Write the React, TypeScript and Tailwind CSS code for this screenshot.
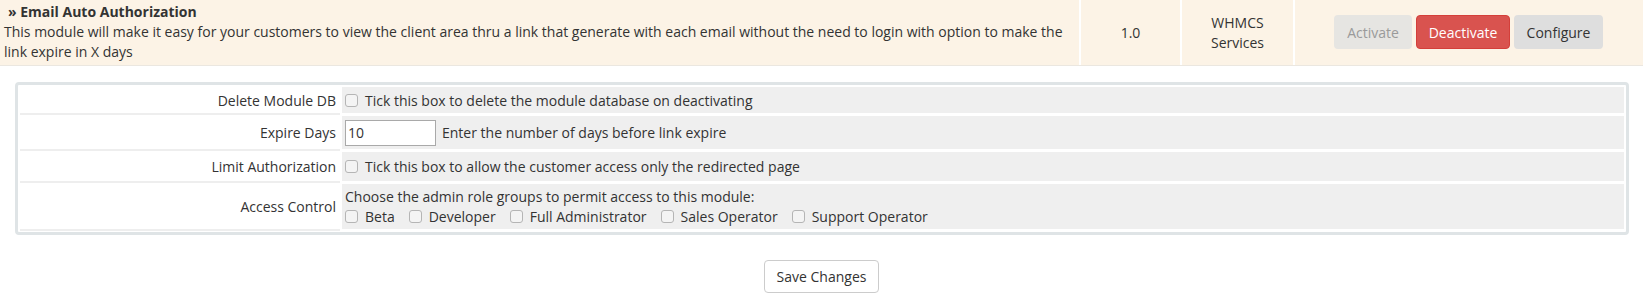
import React from 'react';

const Checkbox: React.FC = () => (
  <input
    type="checkbox"
    className="appearance-none w-[13px] h-[13px] border border-[#b5b5b5] rounded-[3px] bg-[#f4f4f4] shrink-0 m-0"
  />
);

const roles = ['Beta', 'Developer', 'Full Administrator', 'Sales Operator', 'Support Operator'];

const Label: React.FC<{ children: React.ReactNode }> = ({ children }) => (
  <div className="bg-white flex items-center justify-end pr-[4px] shadow-[0_2px_0_#eeeeee]">
    {children}
  </div>
);

export default function App() {
  return (
    <div className="w-[1643px] h-[298px] bg-white font-['Open_Sans',sans-serif] text-[14px] text-[#333]">
      {/* Module row */}
      <div className="flex h-[66px] bg-[#fcf3e6] border-b border-[#ebe7e0]">
        <div className="w-[1079px] pl-[4px] pr-[8px] pt-[2px] leading-[20px]">
          <div className="font-bold pl-[4px]">» Email Auto Authorization</div>
          <div>
            This module will make it easy for your customers to view the client area thru a link that generate with
            each email without the need to login with option to make the link expire in X days
          </div>
        </div>
        <div className="w-[101px] border-l-2 border-white flex items-center justify-center">1.0</div>
        <div className="w-[113px] border-l-2 border-white flex items-center justify-center text-center leading-[20px]">
          WHMCS
          <br />
          Services
        </div>
        <div className="flex-1 border-l-2 border-white flex items-center pl-[39px] gap-[4px] pb-[1px]">
          <button className="w-[78px] h-[34px] rounded-[4px] bg-[#e6e5e2] text-[#9a9a9a]">Activate</button>
          <button className="w-[94px] h-[34px] rounded-[4px] bg-[#d9534f] border border-[#d43f3a] text-white">
            Deactivate
          </button>
          <button className="w-[89px] h-[34px] rounded-[4px] bg-[#dedede] text-[#333]">Configure</button>
        </div>
      </div>

      {/* Config box */}
      <div className="mt-[16px] ml-[15px] mr-[14px] border-[3px] border-[#dfe4e6] rounded-[4px] p-[2px] pb-[3px]">
        <div className="grid grid-cols-[320px_1fr] gap-x-[2px] gap-y-[3px]">
          <Label>Delete Module DB</Label>
          <div className="bg-[#efefef] h-[26px] flex items-center pl-[3px] gap-[7px]">
            <Checkbox />
            <span>Tick this box to delete the module database on deactivating</span>
          </div>

          <Label>Expire Days</Label>
          <div className="bg-[#efefef] h-[33px] flex items-center pl-[3px] gap-[6px]">
            <input
              type="text"
              defaultValue="10"
              className="w-[91px] h-[26px] border border-[#a9a9a9] bg-white px-[2px] text-[14px] text-[#333] outline-none"
            />
            <span>Enter the number of days before link expire</span>
          </div>

          <Label>Limit Authorization</Label>
          <div className="bg-[#efefef] h-[29px] flex items-center pl-[3px] gap-[7px]">
            <Checkbox />
            <span>Tick this box to allow the customer access only the redirected page</span>
          </div>

          <Label>Access Control</Label>
          <div className="bg-[#efefef] h-[45px] flex flex-col justify-center pl-[3px] leading-[20px]">
            <div>Choose the admin role groups to permit access to this module:</div>
            <div className="flex items-center gap-[14px]">
              {roles.map((r) => (
                <label key={r} className="flex items-center gap-[7px]">
                  <Checkbox />
                  <span>{r}</span>
                </label>
              ))}
            </div>
          </div>
        </div>
      </div>

      {/* Save */}
      <div className="flex justify-center mt-[25px]">
        <button className="w-[115px] h-[33px] border border-[#ccc] rounded-[4px] bg-white text-[#333]">
          Save Changes
        </button>
      </div>
    </div>
  );
}
